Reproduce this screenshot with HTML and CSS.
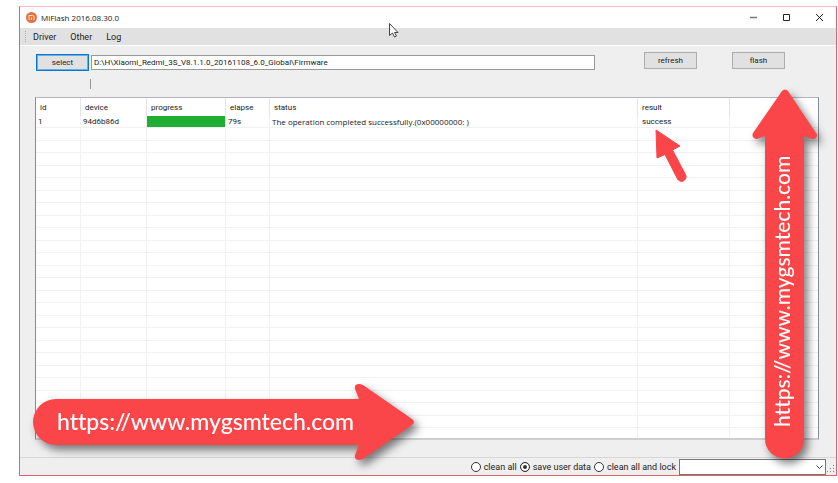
FILE: index.html
```html
<!DOCTYPE html>
<html lang="en">
	<head>
		<meta charset="utf-8">
		<title>MiFlash 2016.08.30.0</title>
		<link rel="stylesheet" href="styles.css">
		<script src="script.js" defer></script>
	</head>
	<body>
		<div class="window">
			<div class="titlebar">
				<svg class="logo" viewBox="0 0 22 22">
					<circle cx="11" cy="11" r="11" fill="#e2733f"/>
					<path d="M6 16V7h7q3 0 3 3v6M11 16v-5" fill="none" stroke="#fff" stroke-width="1.600"/>
				</svg>
				<span class="caption">MiFlash 2016.08.30.0</span>
				<button class="winButton" aria-label="Minimize"><svg viewBox="0 0 9 9"><path d="M1 4.500h7" stroke="#777" stroke-width="1.500"/></svg></button>
				<button class="winButton" aria-label="Maximize"><svg viewBox="0 0 9 9"><path d="M1.500 1.500h6v6h-6z" fill="none" stroke="#222"/></svg></button>
				<button class="winButton" aria-label="Close"><svg viewBox="0 0 9 9"><path d="M1 1l7 7M8 1l-7 7" stroke="#222"/></svg></button>
			</div>

			<div class="menu">
				<span class="grip"></span>
				<button class="menuItem">Driver</button>
				<button class="menuItem">Other</button>
				<button class="menuItem">Log</button>
			</div>

			<div class="content">
				<div class="toolbar">
					<div class="pathGroup">
						<button class="button selected">select</button>
						<input class="path" type="text" aria-label="Firmware path" value="D:\H\Xiaomi_Redmi_3S_V8.1.1.0_20161108_6.0_Global\Firmware">
					</div>
					<div class="actions">
						<button class="button">refresh</button>
						<button class="button">flash</button>
					</div>
				</div>
				<div class="caret"></div>

				<table class="devices">
					<colgroup>
						<col class="colId"><col class="colDevice"><col class="colProgress"><col class="colElapse"><col class="colStatus"><col class="colResult"><col>
					</colgroup>
					<thead>
						<tr><th>id</th><th>device</th><th>progress</th><th>elapse</th><th>status</th><th>result</th><th></th></tr>
					</thead>
					<tbody id="rows">
						<tr><td>1</td><td>94d6b86d</td><td class="bar"><progress value="100" max="100" aria-label="Progress"></progress></td><td>79s</td><td class="status">The operation completed successfully.(0x00000000: )</td><td class="result">success</td><td></td></tr>
					</tbody>
				</table>
			</div>

			<div class="statusbar">
				<label class="option"><input type="radio" name="mode">clean all</label>
				<label class="option"><input type="radio" name="mode" checked>save user data</label>
				<label class="option"><input type="radio" name="mode">clean all and lock</label>
				<div class="combo">
					<select aria-label="Script"><option></option></select>
					<svg class="chevron" viewBox="0 0 7 5"><path d="M.5 .5l3 3 3-3" fill="none" stroke="#444"/></svg>
				</div>
				<svg class="sizeGrip" viewBox="0 0 8 8"><path d="M6 0h1v1h-1zM3 3h1v1h-1zM6 3h1v1h-1zM0 6h1v1h-1zM3 6h1v1h-1zM6 6h1v1h-1z" fill="#888"/></svg>
			</div>
		</div>

		<svg class="cursor" viewBox="0 0 10 15"><path d="M.5 .5v12l3-2.500 2 4 2-1-2-3.500h3.500z" fill="#fff" stroke="#444"/></svg>

		<svg class="pointer" viewBox="0 0 32 54">
			<path d="M1 1L25 17 17.500 21 30.500 45.500A4.300 4.300 0 0 1 22.500 50L10 25.500 2 29z" fill="#fa4649" stroke="#fa4649" stroke-linejoin="round"/>
		</svg>

		<svg class="arrow across" viewBox="0 0 382 78">
			<path d="M23 15H326L322 5Q321 0 326 0Q328 0 330 1L379 35Q383 38 379 41L330 75Q328 76 326 76Q321 76 322 71L326 61H23A23 23 0 0 1 23 15Z" fill="#fa4649"/>
			<text class="acrossText" x="24" y="46">https://www.mygsmtech.com</text>
		</svg>

		<svg class="arrow upward" viewBox="0 0 66 370">
			<path d="M13 47L5 50Q2 50 1 48Q0 46 1 44L30 2Q33 -1 36 2L64 44Q66 46 64 49Q62 50 60 50L52 47V350A19.500 19.500 0 0 1 13 350Z" fill="#fa4649"/>
			<text class="upwardText" transform="translate(38 338) rotate(-90)">https://www.mygsmtech.com</text>
		</svg>
	</body>
</html>
```
FILE: styles.css
```css
body
{
	margin: 6px 1px 0 19px;
	background-color: white;
	color: #222;
	font-family: Roboto, "Liberation Sans", sans-serif;
	font-size: 8px;
	overflow: hidden;
}
button, input, select
{
	font: inherit;
	color: inherit;
	margin: 0;
	padding: 0;
	box-sizing: border-box;
}
.window
{
	border: 1px solid #e2606f;
	border-top-color: #ffb9c4;
	background-color: #efefef;
}
.titlebar
{
	display: flex;
	align-items: center;
	height: 21px;
	padding-left: 6px;
	background-color: white;
	font-family: "Open Sans", sans-serif;
}
.logo
{
	width: 11px;
	height: 11px;
	margin-right: 4px;
}
.caption
{
	flex: 1;
}
.winButton
{
	width: 33px;
	height: 21px;
	border: none;
	background-color: transparent;
}
.winButton svg
{
	display: block;
	width: 9px;
	height: 9px;
	margin: 0 auto;
}
.menu
{
	display: flex;
	align-items: center;
	height: 17px;
	background-color: #e1e1e1;
	border-bottom: 1px solid white;
	font-size: 9px;
}
.grip
{
	height: 11px;
	margin: 0 7px 0 5px;
	border-left: 1px dotted #aaa;
}
.menuItem
{
	border: none;
	background-color: transparent;
	margin-right: 14px;
}
.content
{
	padding: 6px 17px 17px 15px;
}
.toolbar
{
	display: flex;
	align-items: flex-start;
	padding-right: 34px;
}
.pathGroup
{
	display: flex;
	flex: 1;
	align-items: center;
	gap: 2px;
	padding: 2px 49px 0 1px;
}
.path
{
	flex: 1;
	height: 15px;
	border: 1px solid #999;
	background-color: white;
	padding: 0 2px;
}
.actions
{
	display: flex;
	gap: 35px;
}
.button
{
	width: 53px;
	height: 17px;
	border: 1px solid #adadad;
	background-color: #e1e1e1;
}
.selected
{
	border: 1px solid #0078d7;
	outline: 1px solid #0078d780;
	outline-offset: -2px;
}
.caret
{
	height: 10px;
	margin: 8px 0 8px 55px;
	border-left: 1px solid #999;
}
.devices
{
	width: 100%;
	table-layout: fixed;
	border-collapse: separate;
	border-spacing: 0;
	border: 1px solid #868b97;
	border-top-color: #b4b6bd;
	border-bottom: 2px solid #cfcfd3;
	background-color: white;
}
.colId
{
	width: 45px;
}
.colDevice
{
	width: 66px;
}
.colProgress
{
	width: 79px;
}
.colElapse
{
	width: 44px;
}
.colStatus
{
	width: 368px;
}
.colResult
{
	width: 92px;
}
.devices th
{
	height: 18px;
	padding: 0 0 0 4px;
	border-right: 1px solid #e5e5e5;
	text-align: left;
	font-weight: normal;
}
.devices td
{
	height: 12px;
	padding: 0 0 0 2px;
	box-sizing: border-box;
	border-right: 1px solid #f1f1f1;
	border-bottom: 1px solid #f1f1f1;
	line-height: 11px;
	white-space: nowrap;
}
.devices tr:nth-child(even) td
{
	height: 13px;
}
.devices tbody tr:last-child td
{
	height: 10px;
	border-bottom: none;
}
.devices th:last-child, .devices td:last-child
{
	border-right: none;
}
.devices td.bar
{
	padding: 0;
}
.devices td.status
{
	font-family: "Open Sans", sans-serif;
}
.devices td.result
{
	padding-left: 4px;
}
.bar progress
{
	display: block;
	appearance: none;
	width: 100%;
	height: 11px;
}
.bar progress::-webkit-progress-bar
{
	background-color: white;
}
.bar progress::-webkit-progress-value
{
	background-color: #1fad33;
}
.statusbar
{
	display: flex;
	align-items: center;
	justify-content: flex-end;
	height: 17px;
	border-top: 1px solid #d7d7d7;
	font-size: 9px;
}
.option
{
	display: flex;
	align-items: center;
	gap: 3px;
	margin-right: 3px;
}
.option input
{
	appearance: none;
	width: 10px;
	height: 10px;
	border: 1px solid #333;
	border-radius: 50%;
	background-color: white;
}
.option input:checked
{
	background-color: #333;
	box-shadow: inset 0 0 0 2px white;
}
.combo
{
	position: relative;
	width: 147px;
	height: 16px;
}
.combo select
{
	appearance: none;
	display: block;
	width: 100%;
	height: 16px;
	border: 1px solid #777;
	border-radius: 0;
	background-color: white;
}
.chevron
{
	position: absolute;
	right: 3px;
	top: 6px;
	width: 7px;
	height: 5px;
}
.sizeGrip
{
	width: 8px;
	height: 8px;
	margin: 4px 1px 0 1px;
}
.cursor
{
	position: absolute;
	left: 389px;
	top: 23px;
	width: 10px;
	height: 15px;
}
.pointer
{
	position: absolute;
	right: 151px;
	top: 129px;
	width: 32px;
	height: 54px;
}
.arrow
{
	position: absolute;
	overflow: visible;
	filter: drop-shadow(4px 5px 4px rgba(0, 0, 0, 0.5));
	fill: white;
	font-family: Lato, sans-serif;
	font-weight: 500;
	font-variant-ligatures: none;
}
.across
{
	left: 33px;
	top: 384px;
	width: 382px;
	height: 78px;
}
.upward
{
	right: 20px;
	top: 89px;
	width: 66px;
	height: 370px;
}
.acrossText
{
	font-size: 23px;
}
.upwardText
{
	font-size: 21px;
}
```
FILE: script.js
```js
// fill the list with empty grid rows
var rows = document.getElementById("rows");
for (var i = 0; i < 25; i++)
{
	var row = rows.insertRow();
	for (var j = 0; j < 7; j++)
	{
		row.insertCell();
	}
}
```
